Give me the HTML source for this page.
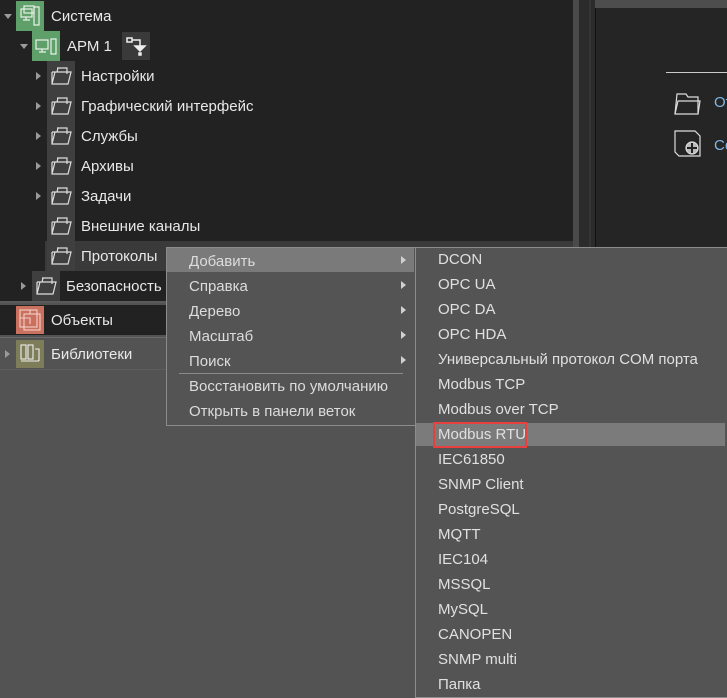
<!DOCTYPE html>
<html><head><meta charset="utf-8"><style>
body{margin:0;width:727px;height:697px;background:#535353;position:relative;overflow:hidden;font-family:"Liberation Sans",sans-serif;font-size:15px;color:#e8e8e8}
.a{position:absolute}
.t{position:absolute;white-space:nowrap;line-height:30px;margin-top:2px}
.ic{position:absolute;width:28px;height:30px;background:#3f3f3f}
.tri{position:absolute;width:0;height:0;border-top:4px solid transparent;border-bottom:4px solid transparent;border-left:5px solid #9a9a9a}
.trd{position:absolute;width:0;height:0;border-left:4px solid transparent;border-right:4px solid transparent;border-top:5px solid #9a9a9a}
.mi{position:absolute;left:189px;white-space:nowrap;line-height:25px;color:#dcdcdc;margin-top:2px}
.ar{position:absolute;left:401px;width:0;height:0;border-top:4px solid transparent;border-bottom:4px solid transparent;border-left:5px solid #d0d0d0}
.si{position:absolute;left:438px;white-space:nowrap;line-height:25px;color:#e0e0e0;margin-top:2px}
</style></head><body>
<div class="a" style="left:0;top:0;width:573px;height:301px;background:#222"></div>
<div class="a" style="left:573px;top:0;width:6px;height:247px;background:#4a4a4a"></div>
<div class="a" style="left:579px;top:0;width:16px;height:247px;background:#2b2b2b"></div>
<div class="a" style="left:589px;top:0;width:2px;height:247px;background:#353535"></div>
<div class="a" style="left:595px;top:0;width:132px;height:8px;background:#4d4d4d"></div>
<div class="a" style="left:595px;top:8px;width:132px;height:239px;background:#252525;border-left:1px solid #111"></div>
<div class="a" style="left:666px;top:72px;width:61px;height:1px;background:#ccc"></div>
<svg class="a" style="left:673px;top:86px" width="30" height="30" viewBox="0 0 30 30" fill="none" stroke="#ddd" stroke-width="1.2"><path d="M4 8h9l2 3h10v17H2z"/><path d="M2 28l3-13h22l-2 13"/></svg>
<div class="t" style="left:714px;top:86px;color:#7fb8e8">От</div>
<svg class="a" style="left:673px;top:129px" width="30" height="30" viewBox="0 0 30 30" fill="none" stroke="#ddd" stroke-width="1.2"><path d="M2 2h20l5 5v20H6l-4-4z"/><circle cx="19" cy="19" r="6" fill="#bbb"/><path d="M19 14v10M14 19h10" stroke="#222" stroke-width="2"/></svg>
<div class="t" style="left:714px;top:129px;color:#7fb8e8">Со</div>

<div class="trd" style="left:4px;top:14px"></div>
<div class="ic" style="left:16px;top:1px;background:#5fa06a"></div>
<svg class="a" style="left:16px;top:1px" width="28" height="30" fill="none" stroke="#e8f0e8" stroke-width="1.2"><rect x="5" y="8" width="11" height="8"/><path d="M10 16v3M7 19h7M18 6h5v18h-5z"/><rect x="8" y="5" width="10" height="7"/></svg>
<div class="t" style="left:51px;top:0px">Система</div>
<div class="trd" style="left:20px;top:44px"></div>
<div class="ic" style="left:32px;top:31px;background:#5fa06a"></div>
<svg class="a" style="left:32px;top:31px" width="28" height="30" fill="none" stroke="#e8f0e8" stroke-width="1.2"><rect x="4" y="9" width="12" height="9"/><path d="M10 18v3M7 21h7M19 8h5v15h-5z"/></svg>
<div class="t" style="left:67px;top:30px">АРМ 1</div>
<div class="ic" style="left:122px;top:32px;height:28px;background:#3a3a3a"></div>
<svg class="a" style="left:122px;top:32px" width="28" height="28" fill="none" stroke="#eee" stroke-width="1.5"><rect x="5" y="6" width="5" height="4"/><path d="M10 8h8v7"/><path d="M13 14h10l-5 5z" fill="#eee"/><rect x="17" y="21" width="2" height="2" fill="#eee"/></svg>

<div class="a" style="left:45px;top:241px;width:528px;height:30px;background:#3a3a3a"></div>

<div class="tri" style="left:36px;top:72px"></div><div class="ic" style="left:47px;top:61px"></div><div class="t" style="left:81px;top:60px">Настройки</div>
<div class="tri" style="left:36px;top:102px"></div><div class="ic" style="left:47px;top:91px"></div><div class="t" style="left:81px;top:90px">Графический интерфейс</div>
<div class="tri" style="left:36px;top:132px"></div><div class="ic" style="left:47px;top:121px"></div><div class="t" style="left:81px;top:120px">Службы</div>
<div class="tri" style="left:36px;top:162px"></div><div class="ic" style="left:47px;top:151px"></div><div class="t" style="left:81px;top:150px">Архивы</div>
<div class="tri" style="left:36px;top:192px"></div><div class="ic" style="left:47px;top:181px"></div><div class="t" style="left:81px;top:180px">Задачи</div>
<div class="ic" style="left:47px;top:211px"></div><div class="t" style="left:81px;top:210px">Внешние каналы</div>
<div class="ic" style="left:47px;top:241px"></div><div class="t" style="left:81px;top:240px">Протоколы</div>
<div class="tri" style="left:21px;top:282px"></div><div class="ic" style="left:32px;top:271px"></div><div class="t" style="left:66px;top:270px">Безопасность</div>
<svg class="a" style="left:47px;top:61px" width="28" height="210" fill="none" stroke="#ddd" stroke-width="1.2">
<g id="f"><path d="M10 7h10v6M5 11h5l1-4M5 11v12h16l3-12H8L5 23"/></g>
<use href="#f" y="30"/><use href="#f" y="60"/><use href="#f" y="90"/><use href="#f" y="120"/><use href="#f" y="150"/><use href="#f" y="180"/></svg>
<svg class="a" style="left:32px;top:271px" width="28" height="30" fill="none" stroke="#ddd" stroke-width="1.2"><path d="M10 7h10v6M5 11h5l1-4M5 11v12h16l3-12H8L5 23"/></svg>

<div class="a" style="left:0;top:301px;width:573px;height:2px;background:#5a5a5a"></div>
<div class="a" style="left:0;top:305px;width:166px;height:30px;background:#222"></div>
<div class="a" style="left:0;top:337px;width:166px;height:1px;background:#6a6a6a"></div>
<div class="a" style="left:16px;top:306px;width:28px;height:28px;background:#c9705e"></div>
<svg class="a" style="left:16px;top:306px" width="28" height="28" fill="none" stroke="#f3d0c8" stroke-width="1.1"><rect x="4" y="4" width="17" height="17"/><rect x="8" y="8" width="16" height="16"/><path d="M8 12h6v6M4 12h4M14 4v4"/></svg>
<div class="t" style="left:51px;top:304px">Объекты</div>
<div class="tri" style="left:5px;top:350px"></div>
<div class="a" style="left:16px;top:340px;width:28px;height:28px;background:#7e7d5a"></div>
<svg class="a" style="left:16px;top:340px" width="28" height="28" fill="none" stroke="#eee" stroke-width="1.1"><rect x="5" y="5" width="5" height="14"/><rect x="12" y="5" width="5" height="14"/><path d="M5 21h18M19 9h4v12"/></svg>
<div class="t" style="left:51px;top:338px">Библиотеки</div>
<div class="a" style="left:0;top:369px;width:166px;height:1px;background:#5c5c5c"></div>

<div class="a" style="left:166px;top:247px;width:248px;height:177px;background:#545454;border:1px solid #8c8c8c"></div>
<div class="a" style="left:167px;top:248px;width:247px;height:24px;background:#7a7a7a"></div>
<div class="mi" style="top:247px">Добавить</div><div class="ar" style="top:256px"></div>
<div class="mi" style="top:272px">Справка</div><div class="ar" style="top:281px"></div>
<div class="mi" style="top:297px">Дерево</div><div class="ar" style="top:306px"></div>
<div class="mi" style="top:322px">Масштаб</div><div class="ar" style="top:331px"></div>
<div class="mi" style="top:347px">Поиск</div><div class="ar" style="top:356px"></div>
<div class="a" style="left:179px;top:373px;width:224px;height:1px;background:#8a8a8a"></div>
<div class="mi" style="top:372px">Восстановить по умолчанию</div>
<div class="mi" style="top:397px">Открыть в панели веток</div>

<div class="a" style="left:415px;top:247px;width:312px;height:449px;background:#545454;border-left:1px solid #8c8c8c;border-bottom:1px solid #8c8c8c;border-top:1px solid #8c8c8c"></div>
<div class="a" style="left:416px;top:423px;width:309px;height:23px;background:#7b7b7b"></div>
<div class="a" style="left:433px;top:422px;width:90px;height:22px;border:2px solid #e8403f"></div>
<div class="si" style="top:245px">DCON</div>
<div class="si" style="top:270px">OPC UA</div>
<div class="si" style="top:295px">OPC DA</div>
<div class="si" style="top:320px">OPC HDA</div>
<div class="si" style="top:345px">Универсальный протокол COM порта</div>
<div class="si" style="top:370px">Modbus TCP</div>
<div class="si" style="top:395px">Modbus over TCP</div>
<div class="si" style="top:420px">Modbus RTU</div>
<div class="si" style="top:445px">IEC61850</div>
<div class="si" style="top:470px">SNMP Client</div>
<div class="si" style="top:495px">PostgreSQL</div>
<div class="si" style="top:520px">MQTT</div>
<div class="si" style="top:545px">IEC104</div>
<div class="si" style="top:570px">MSSQL</div>
<div class="si" style="top:595px">MySQL</div>
<div class="si" style="top:620px">CANOPEN</div>
<div class="si" style="top:645px">SNMP multi</div>
<div class="si" style="top:670px">Папка</div>
</body></html>
